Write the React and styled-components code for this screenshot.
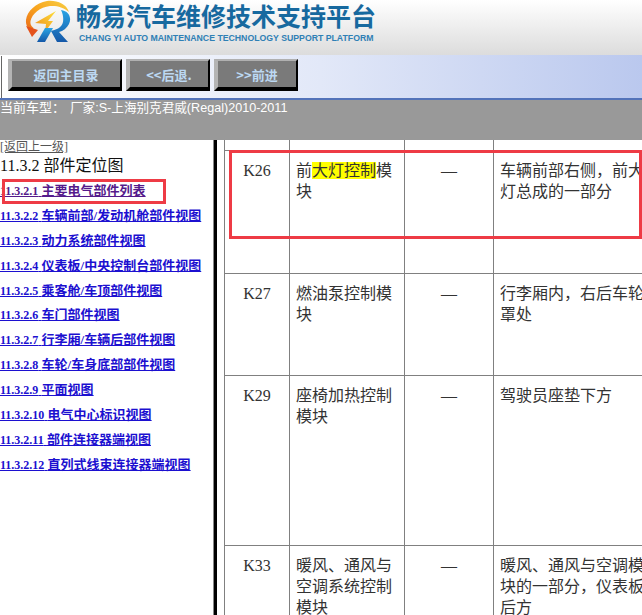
import React from "react";
import styled, { createGlobalStyle } from "styled-components";

const GlobalStyle = createGlobalStyle`
  html, body {
    margin: 0;
    padding: 0;
    background: #fff;
  }
  body {
    font-family: "Liberation Serif", "Noto Sans CJK SC", serif;
    overflow: hidden;
  }
`;

const Page = styled.div`
  width: 642px;
  height: 615px;
  display: flex;
  flex-direction: column;
  overflow: hidden;
`;

const Header = styled.header`
  height: 55px;
  flex: none;
  display: flex;
  align-items: flex-start;
  padding-left: 25px;
  gap: 5px;
  background: linear-gradient(#ffffff, #dcdcdc);
  box-sizing: border-box;
`;

const LogoSvg = styled.svg`
  width: 46px;
  height: 43px;
  flex: none;
`;

const Brand = styled.div`
  display: flex;
  flex-direction: column;
  padding-top: 1px;
`;

const BrandName = styled.div`
  font-family: "Noto Sans CJK SC", sans-serif;
  font-size: 25px;
  font-weight: 700;
  line-height: 29px;
  color: #17699f;
  white-space: nowrap;
`;

const BrandSub = styled.div`
  font-family: "Liberation Sans", sans-serif;
  font-size: 8.72px;
  font-weight: 700;
  line-height: 11px;
  margin: 3px 0 0 3px;
  color: #2f80b5;
  white-space: nowrap;
`;

const Toolbar = styled.nav`
  height: 45px;
  flex: none;
  display: flex;
  gap: 4px;
  position: relative;
  box-sizing: border-box;
  padding: 4px 0 0 8px;
  border-bottom: 2px solid #5373b9;
  background: linear-gradient(90deg, #ffffff 0%, #e2e8f8 50%, #bac8ee 100%);

  &::before {
    content: "";
    position: absolute;
    left: 1px;
    top: 1px;
    bottom: 0;
    width: 1px;
    background: #666666;
  }
`;

const NavButton = styled.button`
  width: ${(p) => p.$w}px;
  height: 32px;
  padding: 0;
  box-sizing: border-box;
  background: #7a7a7a;
  border-style: solid;
  border-width: 2px 2px 4px 4px;
  border-color: #b0b0b0 #000000 #000000 #b4b4b4;
  color: #bcd8f2;
  font-family: "Noto Sans CJK SC", sans-serif;
  font-size: 13px;
  font-weight: 700;
`;

const CarBar = styled.div`
  height: 40px;
  flex: none;
  background: #999999;
  color: #ffffff;
  font-family: "Liberation Sans", "Noto Sans CJK SC", sans-serif;
  font-size: 12.6px;
  line-height: 16px;
  white-space: pre;
`;

const CarLabel = styled.span`
  font-size: 13px;
  margin-right: 5px;
`;

const Content = styled.div`
  flex: 1;
  min-height: 0;
  display: flex;
  position: relative;
`;

const Sidebar = styled.aside`
  width: 213px;
  flex: none;
  overflow: hidden;
`;

const BackLink = styled.a`
  display: block;
  height: 13px;
  font-size: 12px;
  line-height: 14px;
  color: #555555;
  text-decoration: underline;
`;

const SectionTitle = styled.h1`
  margin: 3px 0 0;
  font-size: 16px;
  font-weight: 400;
  line-height: 20px;
  color: #111111;
`;

const NavItem = styled.div`
  height: 24.9px;
  line-height: 25px;
  margin-top: ${(p) => (p.$active ? 1 : 0)}px;
`;

const NavLink = styled.a`
  font-size: 13px;
  font-weight: 700;
  color: ${(p) => (p.$active ? "#551a8b" : "#1c10d0")};
  text-decoration: underline;
  white-space: nowrap;
`;

const NavNum = styled.span`
  font-size: 12px;
`;

const Divider = styled.div`
  width: 3px;
  flex: none;
  background: #000000;
  border-left: 1px solid #888888;
`;

const Main = styled.main`
  flex: 1;
  min-width: 0;
  overflow: hidden;
  padding-left: 7px;
`;

const PartsTable = styled.table`
  width: 426px;
  table-layout: fixed;
  border-collapse: collapse;
  color: #333333;
  font-size: 16px;
  line-height: 21px;
`;

const SpacerCell = styled.td`
  height: 10px;
  padding: 0;
  border: 1px solid #808080;
  border-top: none;
`;

const Row = styled.tr`
  height: ${(p) => p.$h}px;
`;

const Cell = styled.td`
  padding: 9px 6px;
  vertical-align: top;
  border: 1px solid #808080;
`;

const CodeCell = styled(Cell)`
  text-align: center;
`;

const Mark = styled.span`
  background: #ffff00;
`;

const SideMarker = styled.div`
  position: absolute;
  left: 2px;
  top: 39px;
  width: 164px;
  height: 25px;
  box-sizing: border-box;
  border: 3px solid #ee3b45;
`;

const RowMarker = styled.div`
  position: absolute;
  left: 229px;
  top: 10px;
  width: 413px;
  height: 89px;
  box-sizing: border-box;
  border: 3px solid #ee3b45;
`;

const navLinks = [
  { id: 1, num: "11.3.2.1", title: "主要电气部件列表", active: true },
  { id: 2, num: "11.3.2.2", title: "车辆前部/发动机舱部件视图" },
  { id: 3, num: "11.3.2.3", title: "动力系统部件视图" },
  { id: 4, num: "11.3.2.4", title: "仪表板/中央控制台部件视图" },
  { id: 5, num: "11.3.2.5", title: "乘客舱/车顶部件视图" },
  { id: 6, num: "11.3.2.6", title: "车门部件视图" },
  { id: 7, num: "11.3.2.7", title: "行李厢/车辆后部件视图" },
  { id: 8, num: "11.3.2.8", title: "车轮/车身底部部件视图" },
  { id: 9, num: "11.3.2.9", title: "平面视图" },
  { id: 10, num: "11.3.2.10", title: "电气中心标识视图" },
  { id: 11, num: "11.3.2.11", title: "部件连接器端视图" },
  { id: 12, num: "11.3.2.12", title: "直列式线束连接器端视图" }
];

const rows = [
  { code: "K26", height: 123, name: <>前<Mark>大灯控制</Mark>模块</>, place: "车辆前部右侧，前大灯总成的一部分" },
  { code: "K27", height: 102, name: "燃油泵控制模块", place: "行李厢内，右后车轮罩处" },
  { code: "K29", height: 170, name: "座椅加热控制模块", place: "驾驶员座垫下方" },
  { code: "K33", height: 120, name: "暖风、通风与空调系统控制模块", place: "暖风、通风与空调模块的一部分，仪表板后方" }
];

const Logo = () => (
  <LogoSvg viewBox="0 0 46 43" aria-hidden="true">
    <defs>
      <linearGradient id="ring" x1="0" y1="1" x2="1" y2="0">
        <stop offset="0" stopColor="#ea6a18" />
        <stop offset="0.5" stopColor="#f8a51e" />
        <stop offset="1" stopColor="#f7cf45" />
      </linearGradient>
      <linearGradient id="bolt" x1="0" y1="1" x2="1" y2="0">
        <stop offset="0" stopColor="#ef8a1a" />
        <stop offset="1" stopColor="#fde03a" />
      </linearGradient>
      <linearGradient id="blue" x1="0" y1="0" x2="0" y2="1">
        <stop offset="0" stopColor="#2aa4e4" />
        <stop offset="1" stopColor="#1458a8" />
      </linearGradient>
    </defs>
    {/* outer swoosh with arrow head */}
    <path
      d="M44 12C41 3 31 0 22 1 11 3 2 11 1 20c-.5 5 2 9 6 11l1.500-3c-2.500-2-3.500-4-3-7C7 14 15 7 25 6c7-.5 13 1 19 6z"
      fill="url(#ring)"
    />
    <path d="M1 26l12 4-6 7z" fill="#e4521b" />
    {/* bolt */}
    <path d="M31 11L23 21h5l-8 11 1-8-11-1z" fill="url(#bolt)" />
    {/* R */}
    <path d="M12 42l8-14h8l-8 14z" fill="url(#blue)" />
    <path
      d="M36 10c8 1 11 8 8 14-2 4-6 7-10 8l9 10H32l-6-11c4-1 11-3 12-9 .6-4 0-8-2-12z"
      fill="url(#blue)"
    />
  </LogoSvg>
);

const App = () => (
  <Page>
    <GlobalStyle />
    <Header>
      <Logo />
      <Brand>
        <BrandName>畅易汽车维修技术支持平台</BrandName>
        <BrandSub>CHANG YI AUTO MAINTENANCE TECHNOLOGY SUPPORT PLATFORM</BrandSub>
      </Brand>
    </Header>
    <Toolbar>
      <NavButton $w={114}>返回主目录</NavButton>
      <NavButton $w={84}>&lt;&lt;后退.</NavButton>
      <NavButton $w={84}>&gt;&gt;前进</NavButton>
    </Toolbar>
    <CarBar><CarLabel>当前车型：</CarLabel>厂家:S-上海别克君威(Regal)2010-2011</CarBar>
    <Content>
      <Sidebar>
        <BackLink href="#">[返回上一级]</BackLink>
        <SectionTitle>11.3.2 部件定位图</SectionTitle>
        {navLinks.map((link) => (
          <NavItem key={link.id} $active={link.active}>
            <NavLink href="#" $active={link.active}>
              <NavNum>{link.num}</NavNum> {link.title}
            </NavLink>
          </NavItem>
        ))}
      </Sidebar>
      <Divider />
      <Main>
        <PartsTable>
          <colgroup>
            <col width="65" />
            <col width="115" />
            <col width="89" />
            <col width="157" />
          </colgroup>
          <tbody>
            <tr>
              <SpacerCell />
              <SpacerCell />
              <SpacerCell />
              <SpacerCell />
            </tr>
            {rows.map((row) => (
              <Row key={row.code} $h={row.height}>
                <CodeCell>{row.code}</CodeCell>
                <Cell>{row.name}</Cell>
                <CodeCell>—</CodeCell>
                <Cell>{row.place}</Cell>
              </Row>
            ))}
          </tbody>
        </PartsTable>
      </Main>
      <SideMarker />
      <RowMarker />
    </Content>
  </Page>
);

export default App;
